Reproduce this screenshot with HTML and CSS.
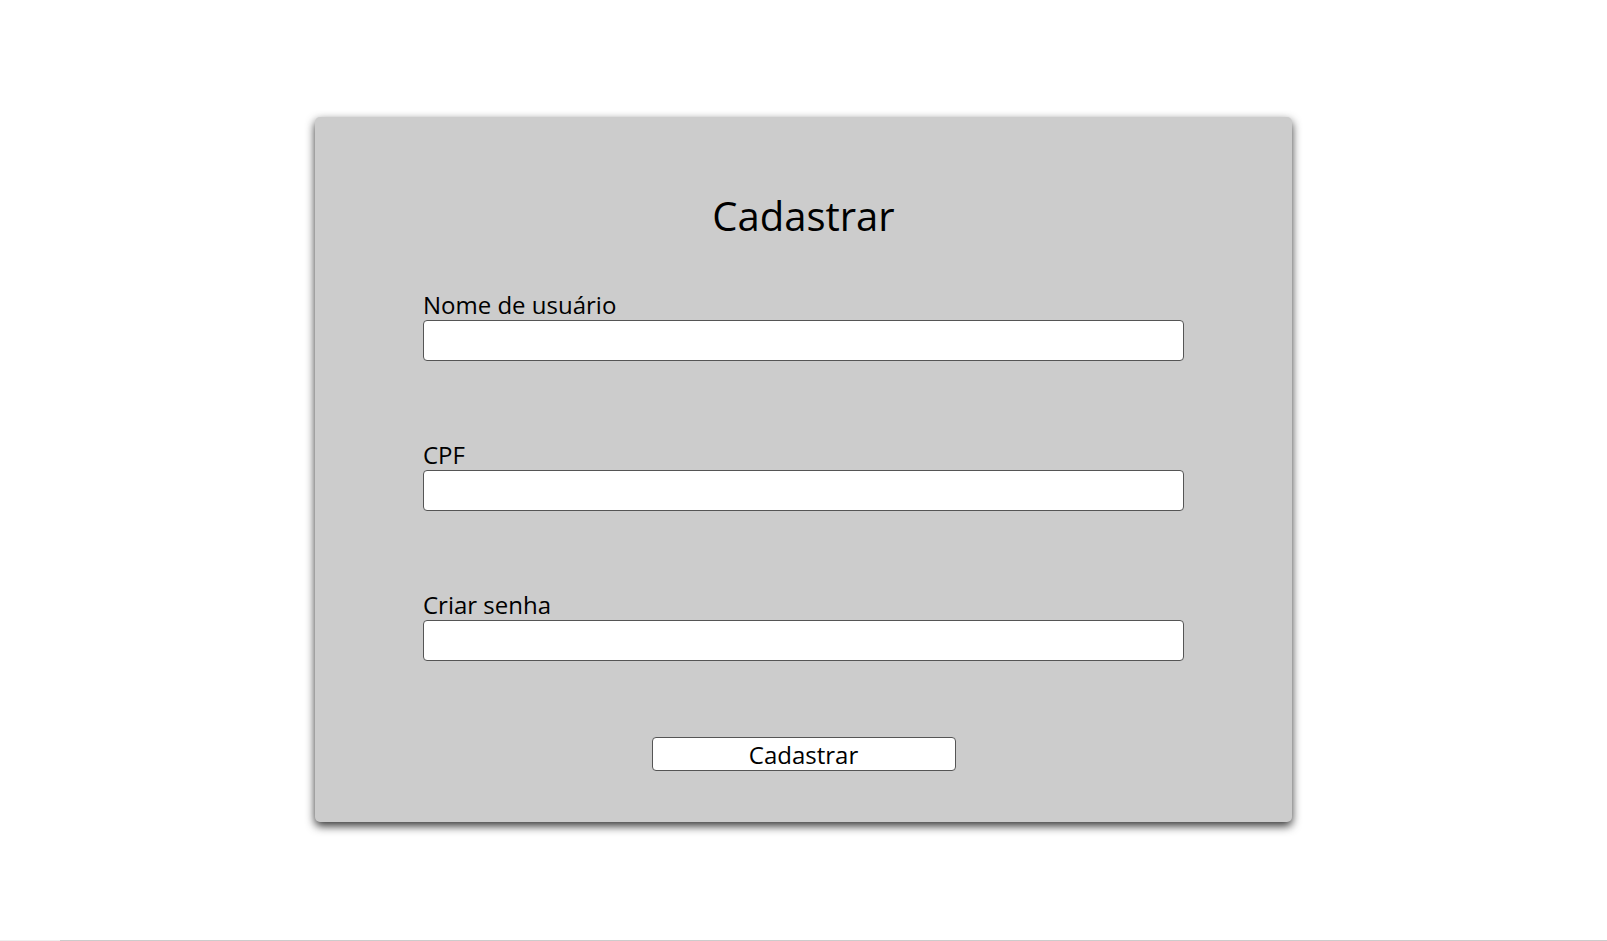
FILE: index.html
```html
<!DOCTYPE html>
<html lang="pt-BR">
<head>
<meta charset="utf-8">
<title>Cadastrar</title>
<link rel="stylesheet" href="styles.css">
</head>
<body>
<main class="card">
  <h1 class="title">Cadastrar</h1>
  <form class="form">
    <div class="field">
      <label class="label" for="user">Nome de usuário</label>
      <input class="input" id="user" type="text">
    </div>
    <div class="field">
      <label class="label" for="cpf">CPF</label>
      <input class="input" id="cpf" type="text">
    </div>
    <div class="field">
      <label class="label" for="pass">Criar senha</label>
      <input class="input" id="pass" type="password">
    </div>
    <button class="button" type="button">Cadastrar</button>
  </form>
</main>
<div class="bottom-line"></div>
</body>
</html>
```
FILE: styles.css
```css
html, body {
  margin: 0;
  padding: 0;
  background: #ffffff;
  font-family: "Open Sans", "Liberation Sans", sans-serif;
  color: #000;
}
body {
  height: 941px;
  position: relative;
  overflow: hidden;
}
.card {
  box-sizing: border-box;
  width: 977px;
  height: 705px;
  margin: 117px auto 0;
  background: #cccccc;
  border-radius: 5px;
  box-shadow: 0 4px 10px rgba(0, 0, 0, 0.8);
  padding: 72px 108px 0;
  display: flex;
  flex-direction: column;
  align-items: center;
}
.title {
  margin: 0;
  font-size: 40px;
  font-weight: 400;
  line-height: 54px;
}
.form {
  width: 100%;
  display: flex;
  flex-direction: column;
  align-items: center;
  margin-top: 47px;
  gap: 79px;
}
.field {
  width: 100%;
  display: flex;
  flex-direction: column;
}
.label {
  font-size: 24px;
  line-height: 30px;
}
.input {
  box-sizing: border-box;
  width: 100%;
  height: 41px;
  margin: 0;
  border: 1px solid #555;
  border-radius: 4px;
  background: #fff;
  font-family: inherit;
  font-size: 20px;
}
.button {
  box-sizing: border-box;
  width: 304px;
  height: 34px;
  margin-top: -3px;
  border: 1px solid #555;
  border-radius: 4px;
  background: #fff;
  font-family: inherit;
  font-size: 24px;
  line-height: 30px;
  padding: 2px 0 0;
  color: #000;
}
.bottom-line {
  position: absolute;
  left: 0;
  right: 0;
  bottom: 0;
  height: 1px;
  background: linear-gradient(to right, #eeeeee 0 60px, #cccccc 60px);
}
```
